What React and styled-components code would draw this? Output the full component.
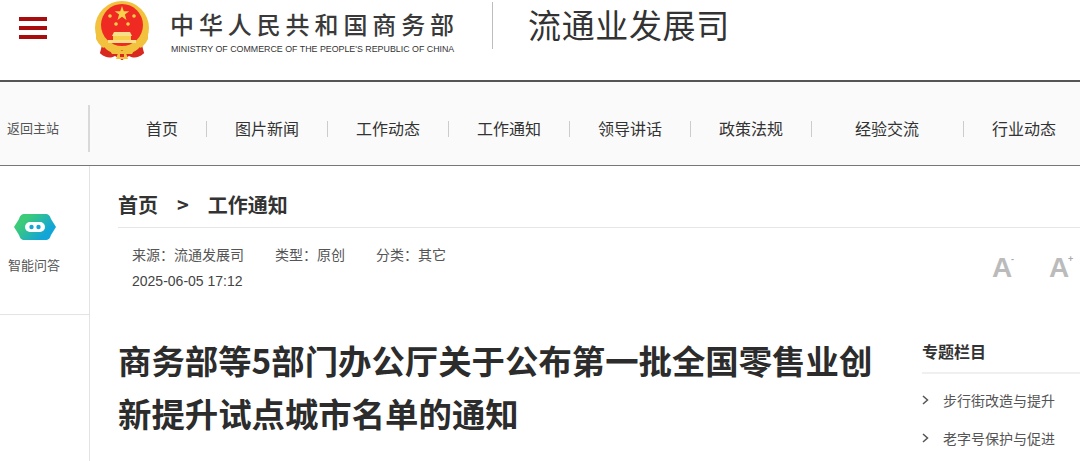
import React from 'react';
import styled, { createGlobalStyle } from 'styled-components';

const GlobalStyle = createGlobalStyle`
  html, body {
    margin: 0;
    padding: 0;
    height: 461px;
    overflow: hidden;
    background: #fff;
    font-family: "Noto Sans CJK SC", "Liberation Sans", sans-serif;
  }
  * { box-sizing: border-box; }
`;

const Page = styled.div`
  width: 1080px;
  height: 461px;
  overflow: hidden;
`;

const Header = styled.header`
  height: 82px;
  display: flex;
  align-items: flex-start;
  border-bottom: 2px solid #555;
  background: #fff;
`;

const MenuButton = styled.div`
  width: 28px;
  height: 22px;
  margin: 17px 47px 0 19px;
  display: flex;
  flex-direction: column;
  justify-content: space-between;
`;

const MenuBar = styled.span`
  height: 4px;
  background: #a80c0c;
`;

const Emblem = styled.svg`
  width: 56px;
  height: 60px;
  margin-top: 1px;
  flex: none;
  filter: blur(0.4px);
`;

const Ministry = styled.div`
  width: 284px;
  margin: 8px 0 0 21px;
`;

const MinistryName = styled.div`
  font-size: 24px;
  font-weight: 500;
  line-height: 32px;
  letter-spacing: 4.9px;
  color: #3a3a3a;
  white-space: nowrap;
  margin-left: -1px;
`;

const MinistryEn = styled.div`
  font-family: "Liberation Sans", sans-serif;
  font-size: 8.85px;
  line-height: 12px;
  margin-top: 3px;
  color: #333;
  white-space: nowrap;
`;

const HeaderDivider = styled.div`
  width: 1px;
  height: 47px;
  margin: 2px 35px 0 37px;
  background: #bdbdbd;
`;

const DeptName = styled.div`
  font-size: 33px;
  line-height: 48px;
  letter-spacing: 0.65px;
  color: #333;
  white-space: nowrap;
`;

const NavBar = styled.nav`
  height: 84px;
  display: flex;
  align-items: center;
  padding-top: 10px;
  background: #fafafa;
  border-bottom: 1px solid #777;
`;

const BackLink = styled.div`
  width: 90px;
  height: 47px;
  flex: none;
  padding-left: 7px;
  font-size: 13px;
  line-height: 45px;
  color: #555;
  border-right: 2px solid #d9d9d9;
`;

const NavList = styled.div`
  display: flex;
  align-items: center;
  padding-left: 28px;
`;

const NavItem = styled.div`
  padding: 0 ${(p) => (p.$wide ? 44 : 28)}px 0 ${(p) => (p.$wide ? 43 : 28)}px;
  height: 16px;
  line-height: 14px;
  font-size: 16px;
  color: #333;
  white-space: nowrap;
  border-right: 1px solid ${(p) => (p.$last ? 'transparent' : '#ccc')};
`;

const Body = styled.div`
  display: flex;
  height: 295px;
`;

const Side = styled.aside`
  width: 90px;
  flex: none;
  border-right: 1px solid #e3e3e3;
`;

const SideTool = styled.div`
  height: 149px;
  display: flex;
  flex-direction: column;
  align-items: center;
  padding-top: 48px;
  border-bottom: 1px solid #e3e3e3;
`;

const BotIcon = styled.svg`
  width: 42px;
  height: 26px;
  margin-left: -20px;
`;

const SideLabel = styled.div`
  margin: 15px 0 0 -21px;
  font-size: 13px;
  line-height: 20px;
  color: #555;
  white-space: nowrap;
`;

const Main = styled.main`
  flex: 1;
  padding-left: 28px;
`;

const Crumbs = styled.div`
  height: 62px;
  display: flex;
  align-items: flex-end;
  gap: 19px;
  padding-bottom: 7px;
  font-size: 20px;
  line-height: 30px;
  font-weight: 700;
  color: #333;
  border-bottom: 1px solid #e6e6e6;
`;

const Meta = styled.div`
  height: 96px;
  display: flex;
  justify-content: space-between;
  padding: 15px 0 0 14px;
`;

const MetaRow = styled.div`
  display: flex;
  gap: 31px;
  font-size: 14px;
  line-height: 22px;
  color: #555;
`;

const MetaDate = styled.div`
  margin-top: 5px;
  font-family: "Liberation Sans", sans-serif;
  font-size: 14px;
  line-height: 22px;
  color: #444;
`;

const FontSizer = styled.div`
  display: flex;
  gap: 37px;
  padding: 9px 11px 0 0;
`;

const SizeButton = styled.div`
  position: relative;
  width: 20px;
  font-family: "Liberation Sans", sans-serif;
  font-size: 28px;
  font-weight: 700;
  line-height: 32px;
  color: #bbb;

  &::after {
    content: "${(p) => p.$mark}";
    position: absolute;
    left: 19px;
    top: 1px;
    font-size: 9px;
    line-height: 12px;
    color: #aaa;
  }
`;

const Columns = styled.div`
  display: flex;
  justify-content: space-between;
`;

const Title = styled.h1`
  width: 765px;
  margin: 9px 0 0;
  font-size: 33.4px;
  font-weight: 700;
  line-height: 53px;
  color: #2c2c2c;
`;

const Topics = styled.div`
  width: 158px;
`;

const TopicsHead = styled.div`
  height: 40px;
  margin: 10px 0 7px;
  font-size: 16px;
  font-weight: 700;
  line-height: 34px;
  color: #333;
  border-bottom: 2px solid #f0f0f0;
`;

const TopicItem = styled.div`
  display: flex;
  align-items: center;
  height: 38px;
  font-size: 14px;
  color: #555;
  white-space: nowrap;
`;

const Chevron = styled.svg`
  width: 7px;
  height: 10px;
  margin-right: 14px;
  flex: none;
`;

const navItems = ['首页', '图片新闻', '工作动态', '工作通知', '领导讲话', '政策法规', '经验交流', '行业动态'];

const NationalEmblem = () => (
  <Emblem viewBox="0 0 56 60">
    <path d="M9 40 L47 40 L50 52 C44 57 38 56 35 54 L28 59 L21 54 C18 56 12 57 6 52 Z" fill="#d8281f" />
    <circle cx="28" cy="27" r="27" fill="#f2c23e" />
    <circle cx="28" cy="24" r="21" fill="#ee2a22" />
    <path d="M28 5 l1.800 5.200 5.500 .1-4.400 3.300 1.600 5.300-4.500-3.200-4.500 3.200 1.600-5.300-4.400-3.300 5.500-.1z" fill="#f8d04c" />
    <circle cx="16" cy="15" r="1.800" fill="#f8d04c" />
    <circle cx="40" cy="15" r="1.800" fill="#f8d04c" />
    <circle cx="22" cy="23" r="1.800" fill="#f8d04c" />
    <circle cx="34" cy="23" r="1.800" fill="#f8d04c" />
    <path d="M20 31 h16 l2 4 h-20 z" fill="#f8e08a" />
    <rect x="19" y="35" width="18" height="4" fill="#f8d04c" />
    <rect x="14" y="39" width="28" height="3" fill="#f8e08a" />
    <path d="M2 30 C8 42 20 47 28 47 C36 47 48 42 54 30 L54 38 C48 50 36 54 28 54 C20 54 8 50 2 38 Z" fill="#f2c23e" />
    <path d="M10 46 C16 53 22 53 28 49 C34 53 40 53 46 46 L50 52 C44 58 38 57 35 55 L28 59 L21 55 C18 57 12 58 6 52 Z" fill="#d8281f" />
    <path d="M15 48 C20 46 24 48 28 50 C32 48 36 46 41 48 L38 53 H18 Z" fill="#f2c23e" />
    <path d="M24 52 h8 l2 6 h-12 z" fill="#f2c23e" />
    <path d="M26 53 h4 v3 h-4 z" fill="#d8281f" />
  </Emblem>
);

const Bot = () => (
  <BotIcon viewBox="0 0 42 26">
    <defs>
      <linearGradient id="botFill" x1="0" y1="0.2" x2="1" y2="0.8">
        <stop offset="0.2" stopColor="#3ccb78" />
        <stop offset="0.8" stopColor="#12a5d8" />
      </linearGradient>
    </defs>
    <path d="M11 0 H31 C35 0 36 2 37 5 L42 13 L37 21 C36 24 35 26 31 26 H11 C7 26 6 24 5 21 L0 13 L5 5 C6 2 7 0 11 0 Z" fill="url(#botFill)" />
    <rect x="11" y="8" width="20" height="10" rx="5" fill="#fff" />
    <circle cx="17.500" cy="13" r="2.200" fill="#12a5d8" />
    <circle cx="24.500" cy="13" r="2.200" fill="#12a5d8" />
  </BotIcon>
);

const TopicChevron = () => (
  <Chevron viewBox="0 0 7 10">
    <path d="M1 1 L5.500 5 L1 9" fill="none" stroke="#555" strokeWidth="1.500" />
  </Chevron>
);

const App = () => {
  return (
    <Page>
      <GlobalStyle />
      <Header>
        <MenuButton>
          <MenuBar />
          <MenuBar />
          <MenuBar />
        </MenuButton>
        <NationalEmblem />
        <Ministry>
          <MinistryName>中华人民共和国商务部</MinistryName>
          <MinistryEn>MINISTRY OF COMMERCE OF THE PEOPLE'S REPUBLIC OF CHINA</MinistryEn>
        </Ministry>
        <HeaderDivider />
        <DeptName>流通业发展司</DeptName>
      </Header>
      <NavBar>
        <BackLink>返回主站</BackLink>
        <NavList>
          {navItems.map((name, i) => (
            <NavItem key={name} $wide={name === '经验交流'} $last={i === navItems.length - 1}>
              {name}
            </NavItem>
          ))}
        </NavList>
      </NavBar>
      <Body>
        <Side>
          <SideTool>
            <Bot />
            <SideLabel>智能问答</SideLabel>
          </SideTool>
        </Side>
        <Main>
          <Crumbs>
            <span>首页</span>
            <span>&gt;</span>
            <span>工作通知</span>
          </Crumbs>
          <Meta>
            <div>
              <MetaRow>
                <span>来源：流通发展司</span>
                <span>类型：原创</span>
                <span>分类：其它</span>
              </MetaRow>
              <MetaDate>2025-06-05 17:12</MetaDate>
            </div>
            <FontSizer>
              <SizeButton $mark="-">A</SizeButton>
              <SizeButton $mark="+">A</SizeButton>
            </FontSizer>
          </Meta>
          <Columns>
            <Title>商务部等5部门办公厅关于公布第一批全国零售业创新提升试点城市名单的通知</Title>
            <Topics>
              <TopicsHead>专题栏目</TopicsHead>
              <TopicItem><TopicChevron />步行街改造与提升</TopicItem>
              <TopicItem><TopicChevron />老字号保护与促进</TopicItem>
            </Topics>
          </Columns>
        </Main>
      </Body>
    </Page>
  );
};

export default App;
